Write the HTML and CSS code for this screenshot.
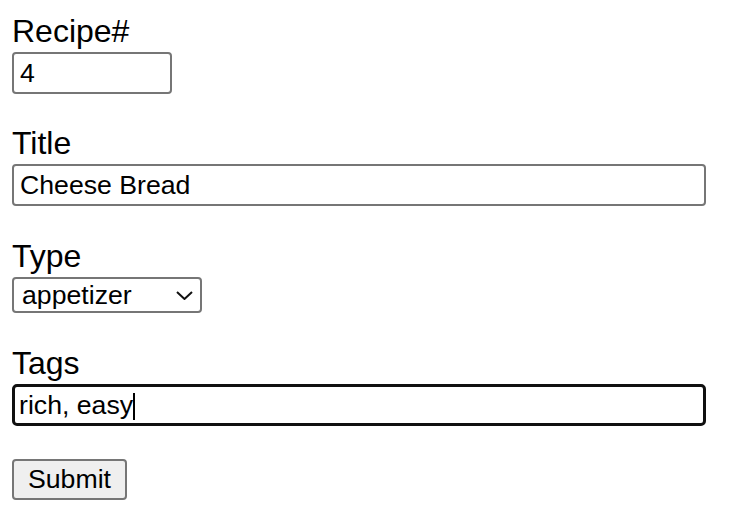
FILE: index.html
```html
<!DOCTYPE html>
<html lang="en">
<head>
<meta charset="utf-8">
<title>Recipe</title>
<link rel="stylesheet" href="styles.css">
</head>
<body>
<form class="form">
  <div class="group">
    <label class="label" for="num">Recipe#</label>
    <input class="field field-short" id="num" type="text" value="4">
  </div>
  <div class="group group-2">
    <label class="label" for="title">Title</label>
    <input class="field field-wide" id="title" type="text" value="Cheese Bread">
  </div>
  <div class="group group-3">
    <label class="label" for="type">Type</label>
    <div class="select-wrap">
      <select class="select" id="type">
        <option>appetizer</option>
        <option>entree</option>
        <option>dessert</option>
      </select>
      <svg class="chevron" width="17" height="9" viewBox="0 0 17 9"><path d="M1 1 L8.5 8 L16 1" fill="none" stroke="#111" stroke-width="2"/></svg>
    </div>
  </div>
  <div class="group group-4">
    <label class="label" for="tags">Tags</label>
    <div class="focus-wrap">
      <input class="field field-wide field-focus" id="tags" type="text" value="rich, easy">
      <span class="caret"></span>
    </div>
  </div>
  <div class="group group-5">
    <button class="button" type="button">Submit</button>
  </div>
</form>
</body>
</html>
```

FILE: styles.css
```css
html, body {
  margin: 0;
  padding: 0;
  background: #fff;
}

body {
  font-family: "Liberation Sans", Arial, sans-serif;
  color: #000;
}

.form {
  display: flex;
  flex-direction: column;
  padding: 13px 0 0 12px;
}

.group {
  display: flex;
  flex-direction: column;
  align-items: flex-start;
  gap: 2px;
}

.group-2 { margin-top: 31px; }
.group-3 { margin-top: 32px; }
.group-4 { margin-top: 32px; }
.group-5 { margin-top: 33px; }

.label {
  font-size: 32px;
  line-height: 37px;
}

.field {
  box-sizing: border-box;
  height: 42px;
  border: 2px solid #767676;
  border-radius: 4px;
  padding: 2px 6px;
  font-family: "Liberation Sans", Arial, sans-serif;
  font-size: 26.67px;
  color: #000;
  background: #fff;
  outline: none;
}

.field-short {
  width: 160px;
}

.field-wide {
  width: 694px;
}

.focus-wrap {
  position: relative;
}

.field-focus {
  display: block;
  border: 3px solid #101010;
  border-radius: 5px;
  padding: 2px 4px;
}

.caret {
  position: absolute;
  left: 121px;
  top: 9px;
  width: 2px;
  height: 27px;
  background: #000;
}

.select-wrap {
  position: relative;
  width: 190px;
  height: 36px;
}

.select {
  -webkit-appearance: none;
  appearance: none;
  box-sizing: border-box;
  width: 190px;
  height: 36px;
  border: 2px solid #767676;
  border-radius: 4px;
  padding: 0 8px;
  font-family: "Liberation Sans", Arial, sans-serif;
  font-size: 26.67px;
  color: #000;
  background: #fff;
}

.chevron {
  position: absolute;
  left: 164px;
  top: 14px;
  pointer-events: none;
}

.button {
  box-sizing: border-box;
  width: 115px;
  height: 41px;
  border: 2px solid #767676;
  border-radius: 4px;
  background: #efefef;
  font-family: "Liberation Sans", Arial, sans-serif;
  font-size: 26.67px;
  color: #000;
  padding: 0;
}
```
